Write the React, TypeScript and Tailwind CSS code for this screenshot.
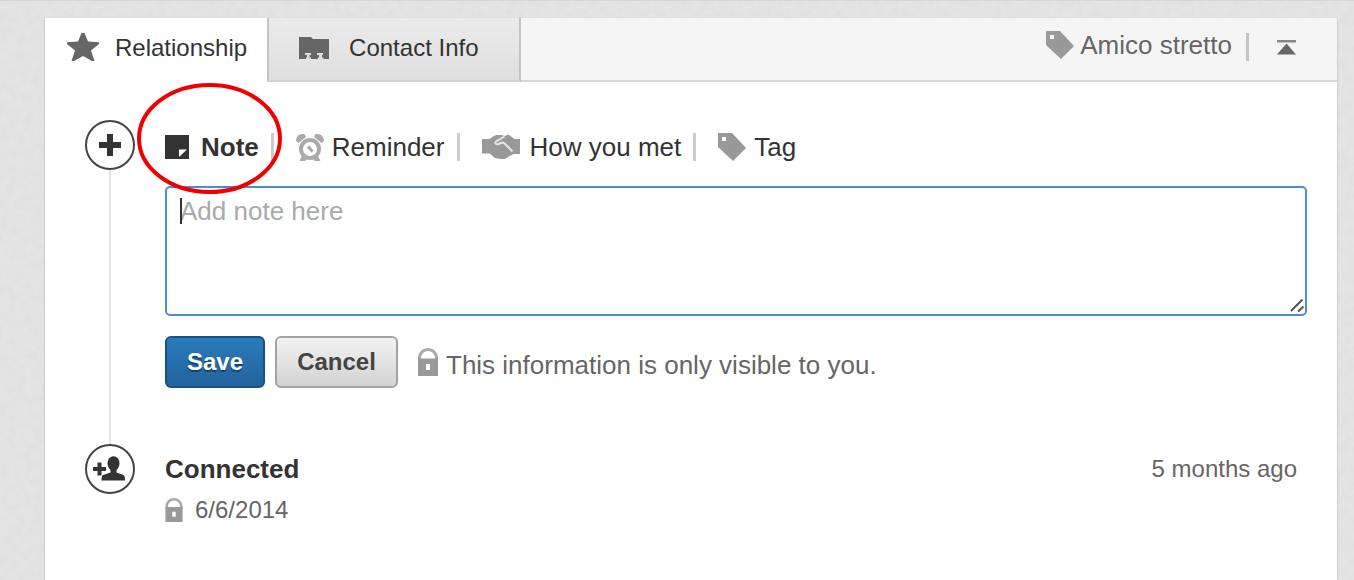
import type { ReactNode } from "react";

function StarIcon() {
  return (
    <svg width="34" height="30" viewBox="0 0 34 30" fill="#666" aria-hidden="true">
      <path d="M15.500 0h3l3.500 8.500 11 .8v1.700l-8 6.500 3.500 10.500h-2.500L17 23l-9 5H5.500L9 17.500 1 11V9.300l11-.8z" />
    </svg>
  );
}

function FolderIcon() {
  return (
    <svg width="30" height="24" viewBox="0 0 30 24" aria-hidden="true">
      <path d="M0 1h12l2 2h16v20H0z" fill="#666" />
      <path d="M6 17h6v2h-1.500v2.500h1.500V23H7v-1.500h1V19H6zM18 17h6v2h-1v2.500h1.500V23H19v-1.500h1V19h-2z" fill="#ddd" />
    </svg>
  );
}

function TagIcon() {
  return (
    <svg width="28" height="28" viewBox="0 0 28 28" aria-hidden="true">
      <path fillRule="evenodd" d="M0 0h14l14 15-13 13L0 14zM4 4v4h4V4z" fill="#999" />
    </svg>
  );
}

function CollapseIcon() {
  return (
    <svg width="19" height="16" viewBox="0 0 19 16" aria-hidden="true">
      <path d="M0 1h19v2.500H0z" fill="#888" />
      <path d="M9.500 4.500L19 15.500H0z" fill="#666" />
    </svg>
  );
}

function NoteIcon() {
  return (
    <svg width="24" height="24" viewBox="0 0 24 24" aria-hidden="true">
      <path d="M0 0h24v24H0z" fill="#333" />
      <path d="M14 14.500h8L14 22z" fill="#fff" />
    </svg>
  );
}

function ClockIcon() {
  return (
    <svg width="28" height="28" viewBox="0 0 28 28" fill="none" stroke="#aaa" aria-hidden="true">
      <path d="M0 8C0 3 4 0 9 1.500L10 4 2.500 10zM28 8c0-5-4-8-9-6.500L18 4l7.500 6z" fill="#aaa" stroke="none" />
      <circle cx="14" cy="16" r="9" strokeWidth="4" />
      <path d="M12 13.500l4.500 5" strokeWidth="3" />
      <path d="M3.500 28l2.500-5 5 3-2 2zM24.500 28L22 23l-5 3 2 2z" fill="#aaa" stroke="none" />
    </svg>
  );
}

function HandshakeIcon() {
  return (
    <svg width="38" height="26" viewBox="0 0 38 26" aria-hidden="true">
      <path d="M0 5h7c3-1 4.500-3.500 7.500-4h5l3 1 4-1.500 6 4.500H38V20h-6.500l-4 2-4.500 3h-4L13 24l-5.500-4.500H0z" fill="#999" />
      <path d="M22.500 2.500L14 7.500c-1.500 2 .5 3.500 2.500 2.500l3.500-1.500 2 .5 8.500 8.500" fill="none" stroke="#e6e6e6" strokeWidth="2" />
    </svg>
  );
}

function LockIcon({ className }: { className: string }) {
  return (
    <svg className={className} viewBox="0 0 20 28" aria-hidden="true">
      <path d="M1.500 12V9.500a8.500 8 0 0 1 17 0V12" fill="none" stroke="#aaa" strokeWidth="3" />
      <path fillRule="evenodd" d="M0 10.500h20V28H0zM8 16v6h4v-6z" fill="#999" />
    </svg>
  );
}

function PlusIcon() {
  return (
    <svg width="22" height="22" viewBox="0 0 22 22" aria-hidden="true">
      <path d="M8 0h6v8h8v6h-8v8H8v-8H0V8h8z" fill="#333" />
    </svg>
  );
}

function AddPersonIcon() {
  return (
    <svg width="34" height="26" viewBox="0 0 34 26" fill="#333" aria-hidden="true">
      <path d="M4.500 6.500h4V11H13v4H8.500v4.500h-4V15H0v-4h4.500z" />
      <ellipse cx="20.500" cy="7.500" rx="6" ry="7.300" />
      <path d="M17.500 12h6v4.500l7 2.500c1 .8 1.500 2 1.500 5.500H8.500c0-3.500.5-4.700 1.500-5.500l7.500-2.500z" />
    </svg>
  );
}

const actions = [
  { label: "Note", icon: <NoteIcon />, className: "gap-3 font-bold" },
  { label: "Reminder", icon: <ClockIcon />, className: "gap-2" },
  { label: "How you met", icon: <HandshakeIcon />, className: "gap-[10px]" },
  { label: "Tag", icon: <TagIcon />, className: "gap-2" },
];

function TimelineRow({ icon, line, children }: { icon: ReactNode; line?: boolean; children: ReactNode }) {
  return (
    <li className="flex gap-[30px]">
      <div className="flex w-[50px] shrink-0 flex-col items-center">
        <div className="flex size-[50px] shrink-0 items-center justify-center rounded-full border-2 border-[#444] bg-white">
          {icon}
        </div>
        {line && <div className="w-[2px] flex-1 bg-[#e4e4e4]" />}
      </div>
      <div className="min-w-0 flex-1">{children}</div>
    </li>
  );
}

function PaperTexture() {
  return (
    <svg className="absolute inset-0 size-full opacity-40" aria-hidden="true">
      <filter id="paper">
        <feTurbulence type="fractalNoise" baseFrequency="0.12" numOctaves="3" stitchTiles="stitch" />
        <feColorMatrix values="0 0 0 0 0.700  0 0 0 0 0.700  0 0 0 0 0.700  2 0 0 0 -0.700" />
      </filter>
      <rect width="100%" height="100%" filter="url(#paper)" />
    </svg>
  );
}

export default function App() {
  return (
    <div className="relative flex min-h-screen flex-col border-t border-[#d4d4d4] bg-[#e4e4e4] pt-[17px] pr-[17px] pl-[45px] font-['Liberation_Sans',Arial,sans-serif] text-[#333]">
      <PaperTexture />
      <main className="relative flex-1 bg-white shadow-[0_1px_2px_rgba(0,0,0,0.25)]">
        <header className="flex h-16 bg-[#f5f5f5]">
          <nav className="flex text-[24px] leading-7">
            <button className="flex items-center gap-[15px] bg-white pr-[20px] pb-1 pl-[21px]">
              <StarIcon />
              Relationship
            </button>
            <button className="flex items-center gap-[20px] border-x-2 border-b-2 border-x-[#c4c4c4] border-b-[#d4d4d4] bg-linear-to-b from-[#ebebeb] to-[#dfdfdf] pr-[40px] pb-[2px] pl-[30px]">
              <FolderIcon />
              Contact Info
            </button>
          </nav>
          <div className="flex flex-1 items-center justify-end border-b-2 border-[#d8d8d8] pr-[41px] pb-2 text-[26px] leading-7 text-[#666]">
            <a href="#tag" className="flex items-center gap-[6px]">
              <TagIcon />
              Amico stretto
            </a>
            <div className="mt-1 ml-[14px] h-7 w-[3px] bg-[#c4c4c4]" />
            <button aria-label="Collapse" className="mt-1 ml-[28px]">
              <CollapseIcon />
            </button>
          </div>
        </header>

        <ul className="pt-[38px] pr-[30px] pl-10">
          <TimelineRow icon={<PlusIcon />} line>
            <div className="flex h-[54px] items-center text-[26px] leading-7">
              {actions.map((action, i) => (
                <div key={action.label} className="flex items-center">
                  {i > 0 && <div className="mr-[22px] ml-3 h-7 w-[3px] bg-[#ccc]" />}
                  <button className={`flex items-center ${action.className}`}>
                    {action.icon}
                    {action.label}
                  </button>
                </div>
              ))}
            </div>

            <div className="relative mt-3">
              <textarea
                aria-label="Note"
                placeholder="Add note here"
                className="block h-[130px] w-full resize-none rounded-[5px] border-2 border-[#4a8fd3] bg-white px-[13px] py-2 text-[26px] leading-[30px] shadow-[inset_0_0_4px_rgba(0,0,0,0.05)] outline-none placeholder:text-[#aaa]"
              />
              <span className="absolute top-3 left-[15px] h-[26px] w-[2px] bg-[#333]" />
              <svg className="absolute right-[2px] bottom-[3px]" width="15" height="15" viewBox="0 0 15 15" aria-hidden="true">
                <path d="M1 13L12.500 1.500M8 13.500l5.500-5" stroke="#555" strokeWidth="2" />
              </svg>
            </div>

            <div className="mt-5 flex pb-14 text-[24px] leading-7">
              <button className="h-[52px] w-[100px] rounded-[6px] border-2 border-[#1b5083] bg-linear-to-b from-[#2a7cbd] to-[#22639d] font-bold text-white text-shadow-[0_2px_1px_rgba(0,0,0,0.4)]">
                Save
              </button>
              <button className="ml-[10px] h-[52px] w-[123px] rounded-[6px] border-2 border-[#a3a3a3] bg-linear-to-b from-[#f3f3f3] to-[#d3d3d3] font-bold text-[#444]">
                Cancel
              </button>
              <p className="ml-5 flex h-[52px] items-center gap-2 text-[26px] leading-7 text-[#666]">
                <LockIcon className="h-7 w-5" />
                <span className="pt-[6px]">This information is only visible to you.</span>
              </p>
            </div>
          </TimelineRow>

          <TimelineRow icon={<AddPersonIcon />}>
            <div className="flex h-[50px] items-center justify-between pr-[10px]">
              <h2 className="text-[26px] leading-7 font-bold">Connected</h2>
              <time className="text-[24px] leading-7 text-[#666]">5 months ago</time>
            </div>
            <p className="flex h-8 items-center gap-3 text-[24px] leading-7 text-[#666]">
              <LockIcon className="h-6 w-[18px]" />
              6/6/2014
            </p>
          </TimelineRow>
        </ul>

        {/* highlight ring around the Note action */}
        <svg className="absolute top-[65px] left-[92px]" width="145" height="111" viewBox="0 0 145 111" aria-hidden="true">
          <ellipse cx="72.500" cy="55.500" rx="70.500" ry="53.500" fill="none" stroke="#f00000" strokeWidth="4" />
        </svg>
      </main>
    </div>
  );
}
